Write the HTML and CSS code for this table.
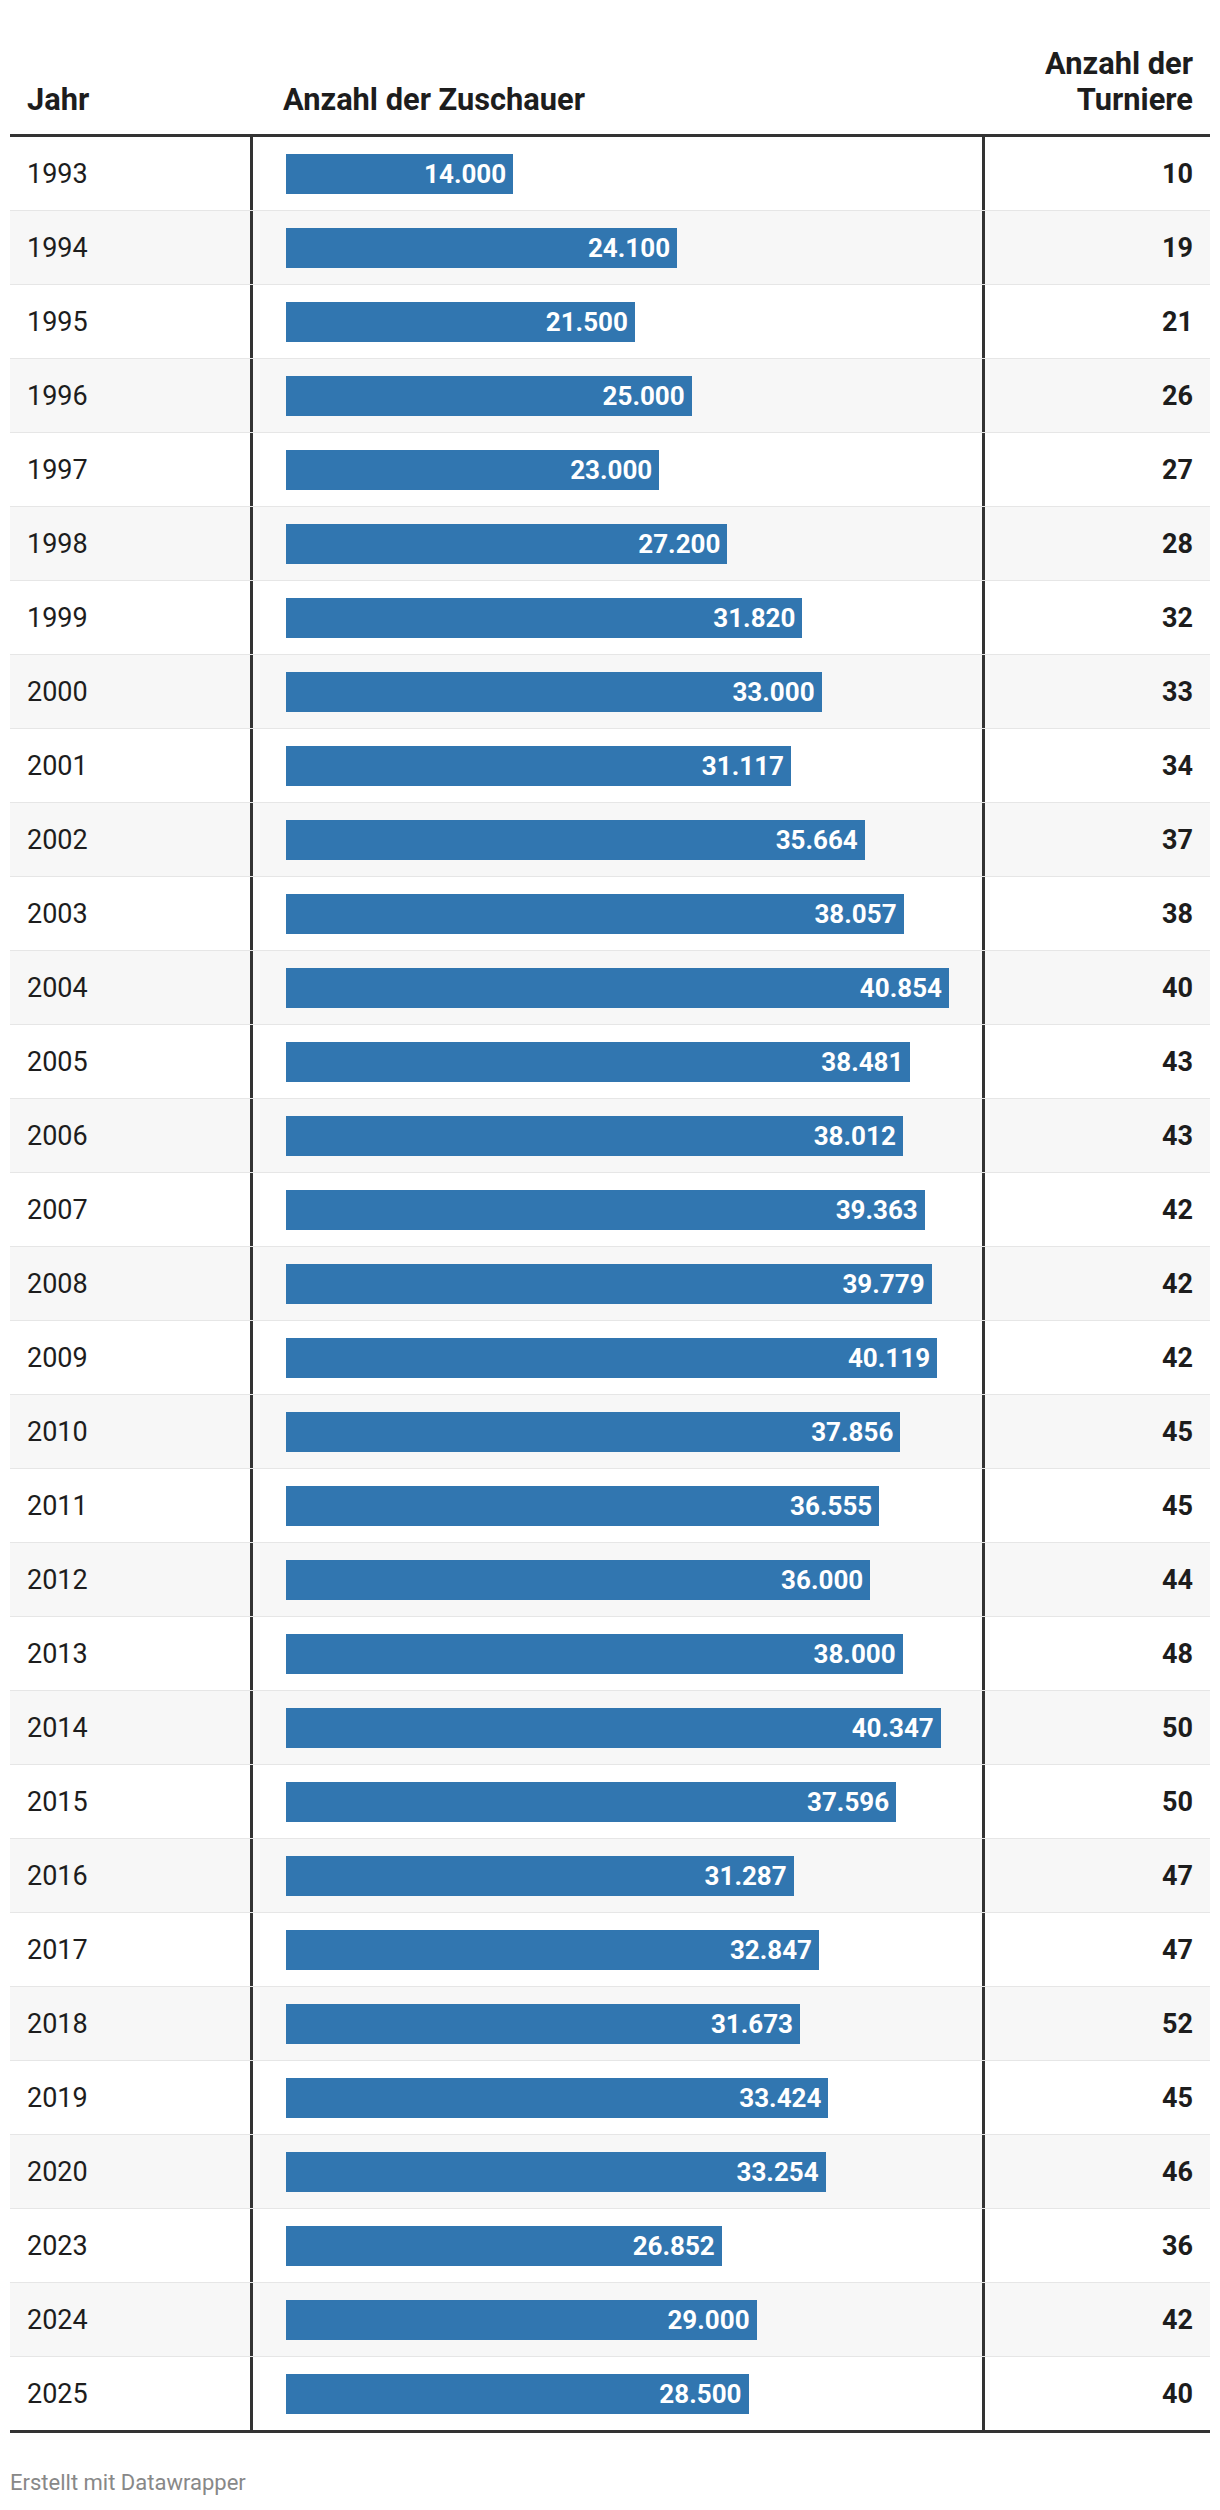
FILE: index.html
```html
<!DOCTYPE html>
<html lang="de">
<head>
<meta charset="utf-8">
<title>Anzahl der Zuschauer</title>
<link rel="stylesheet" href="styles.css">
</head>
<body>
<div class="chart">
  <div class="table">
    <div class="row head">
      <div class="cell c-year">Jahr</div>
      <div class="cell c-bar">Anzahl der Zuschauer</div>
      <div class="cell c-num">Anzahl der<br>Turniere</div>
    </div>
    <div class="row"><div class="cell c-year">1993</div><div class="cell c-bar"><div class="bar" style="width:34.27%">14.000</div></div><div class="cell c-num">10</div></div>
    <div class="row"><div class="cell c-year">1994</div><div class="cell c-bar"><div class="bar" style="width:58.99%">24.100</div></div><div class="cell c-num">19</div></div>
    <div class="row"><div class="cell c-year">1995</div><div class="cell c-bar"><div class="bar" style="width:52.63%">21.500</div></div><div class="cell c-num">21</div></div>
    <div class="row"><div class="cell c-year">1996</div><div class="cell c-bar"><div class="bar" style="width:61.19%">25.000</div></div><div class="cell c-num">26</div></div>
    <div class="row"><div class="cell c-year">1997</div><div class="cell c-bar"><div class="bar" style="width:56.30%">23.000</div></div><div class="cell c-num">27</div></div>
    <div class="row"><div class="cell c-year">1998</div><div class="cell c-bar"><div class="bar" style="width:66.58%">27.200</div></div><div class="cell c-num">28</div></div>
    <div class="row"><div class="cell c-year">1999</div><div class="cell c-bar"><div class="bar" style="width:77.89%">31.820</div></div><div class="cell c-num">32</div></div>
    <div class="row"><div class="cell c-year">2000</div><div class="cell c-bar"><div class="bar" style="width:80.78%">33.000</div></div><div class="cell c-num">33</div></div>
    <div class="row"><div class="cell c-year">2001</div><div class="cell c-bar"><div class="bar" style="width:76.17%">31.117</div></div><div class="cell c-num">34</div></div>
    <div class="row"><div class="cell c-year">2002</div><div class="cell c-bar"><div class="bar" style="width:87.30%">35.664</div></div><div class="cell c-num">37</div></div>
    <div class="row"><div class="cell c-year">2003</div><div class="cell c-bar"><div class="bar" style="width:93.15%">38.057</div></div><div class="cell c-num">38</div></div>
    <div class="row"><div class="cell c-year">2004</div><div class="cell c-bar"><div class="bar" style="width:100%">40.854</div></div><div class="cell c-num">40</div></div>
    <div class="row"><div class="cell c-year">2005</div><div class="cell c-bar"><div class="bar" style="width:94.19%">38.481</div></div><div class="cell c-num">43</div></div>
    <div class="row"><div class="cell c-year">2006</div><div class="cell c-bar"><div class="bar" style="width:93.04%">38.012</div></div><div class="cell c-num">43</div></div>
    <div class="row"><div class="cell c-year">2007</div><div class="cell c-bar"><div class="bar" style="width:96.35%">39.363</div></div><div class="cell c-num">42</div></div>
    <div class="row"><div class="cell c-year">2008</div><div class="cell c-bar"><div class="bar" style="width:97.37%">39.779</div></div><div class="cell c-num">42</div></div>
    <div class="row"><div class="cell c-year">2009</div><div class="cell c-bar"><div class="bar" style="width:98.20%">40.119</div></div><div class="cell c-num">42</div></div>
    <div class="row"><div class="cell c-year">2010</div><div class="cell c-bar"><div class="bar" style="width:92.66%">37.856</div></div><div class="cell c-num">45</div></div>
    <div class="row"><div class="cell c-year">2011</div><div class="cell c-bar"><div class="bar" style="width:89.48%">36.555</div></div><div class="cell c-num">45</div></div>
    <div class="row"><div class="cell c-year">2012</div><div class="cell c-bar"><div class="bar" style="width:88.12%">36.000</div></div><div class="cell c-num">44</div></div>
    <div class="row"><div class="cell c-year">2013</div><div class="cell c-bar"><div class="bar" style="width:93.01%">38.000</div></div><div class="cell c-num">48</div></div>
    <div class="row"><div class="cell c-year">2014</div><div class="cell c-bar"><div class="bar" style="width:98.76%">40.347</div></div><div class="cell c-num">50</div></div>
    <div class="row"><div class="cell c-year">2015</div><div class="cell c-bar"><div class="bar" style="width:92.03%">37.596</div></div><div class="cell c-num">50</div></div>
    <div class="row"><div class="cell c-year">2016</div><div class="cell c-bar"><div class="bar" style="width:76.58%">31.287</div></div><div class="cell c-num">47</div></div>
    <div class="row"><div class="cell c-year">2017</div><div class="cell c-bar"><div class="bar" style="width:80.40%">32.847</div></div><div class="cell c-num">47</div></div>
    <div class="row"><div class="cell c-year">2018</div><div class="cell c-bar"><div class="bar" style="width:77.53%">31.673</div></div><div class="cell c-num">52</div></div>
    <div class="row"><div class="cell c-year">2019</div><div class="cell c-bar"><div class="bar" style="width:81.81%">33.424</div></div><div class="cell c-num">45</div></div>
    <div class="row"><div class="cell c-year">2020</div><div class="cell c-bar"><div class="bar" style="width:81.40%">33.254</div></div><div class="cell c-num">46</div></div>
    <div class="row"><div class="cell c-year">2023</div><div class="cell c-bar"><div class="bar" style="width:65.73%">26.852</div></div><div class="cell c-num">36</div></div>
    <div class="row"><div class="cell c-year">2024</div><div class="cell c-bar"><div class="bar" style="width:70.98%">29.000</div></div><div class="cell c-num">42</div></div>
    <div class="row"><div class="cell c-year">2025</div><div class="cell c-bar"><div class="bar" style="width:69.76%">28.500</div></div><div class="cell c-num">40</div></div>
  </div>
  <div class="footer">Erstellt mit Datawrapper</div>
</div>
</body>
</html>
```
FILE: styles.css
```css
html, body {
  margin: 0;
  padding: 0;
  background: #ffffff;
}

body {
  font-family: Roboto, "Noto Sans", "Liberation Sans", sans-serif;
  color: #1d1d1d;
}

.chart {
  padding: 0 10px;
}

.table {
  border-bottom: 3px solid #333333;
}

.row {
  display: grid;
  grid-template-columns: 243px 732px 225px;
  height: 74px;
  box-sizing: border-box;
  border-bottom: 1px solid #e6e6e6;
  font-size: 27px;
}

.row:nth-child(odd) {
  background: #f7f7f7;
}

.row:last-child {
  border-bottom: none;
  height: 73px;
}

.row.head {
  height: 137px;
  background: #ffffff;
  border-bottom: 3px solid #333333;
  font-weight: 700;
  font-size: 30.8px;
  line-height: 36px;
}

.cell {
  box-sizing: border-box;
  display: flex;
  align-items: center;
}

.head .cell {
  align-items: flex-end;
  padding-bottom: 16px;
  border-right: none;
}

.c-year {
  padding-left: 17px;
  border-right: 3px solid #333333;
}

.c-bar {
  padding: 0 33px;
  border-right: 3px solid #333333;
}

.head .c-bar {
  padding-left: 30px;
}

.c-num {
  justify-content: flex-end;
  text-align: right;
  padding-right: 17px;
  font-weight: 700;
}

.bar {
  height: 40px;
  line-height: 40px;
  background: #3176b0;
  color: #ffffff;
  font-weight: 700;
  font-size: 26px;
  text-align: right;
  padding-right: 7px;
  box-sizing: border-box;
  white-space: nowrap;
}

.footer {
  padding-top: 35px;
  font-size: 22px;
  line-height: 30px;
  color: #888888;
}
```
